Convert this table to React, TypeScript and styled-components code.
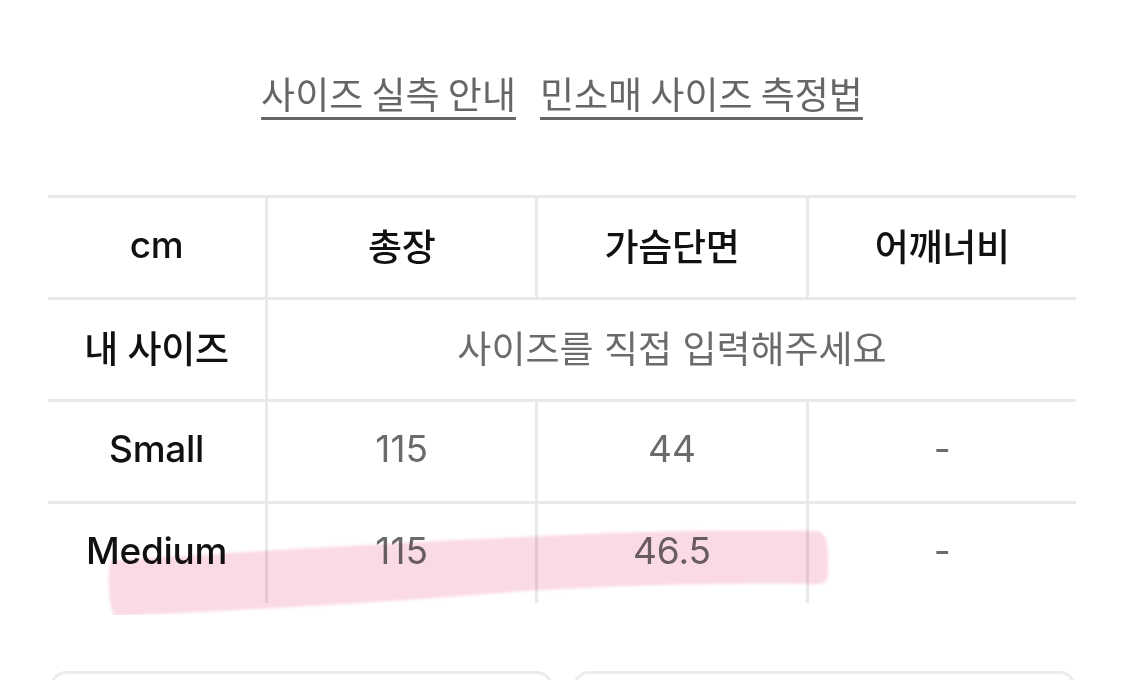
import React from "react";
import styled, { createGlobalStyle } from "styled-components";

const Global = createGlobalStyle`
  html, body { margin: 0; padding: 0; background: #ffffff; }
  body { font-family: Inter, "Noto Sans CJK KR", sans-serif; }
`;

const Page = styled.div`
  width: 1125px;
  height: 680px;
  overflow: hidden;
  box-sizing: border-box;
  padding: 68px 49px 0 48px;
  display: flex;
  flex-direction: column;
`;

const Links = styled.div`
  display: flex;
  justify-content: center;
  gap: 24px;
`;

const GuideLink = styled.a`
  font-family: "Noto Sans CJK KR", sans-serif;
  font-size: 37px;
  line-height: 50px;
  color: #666666;
  text-decoration: underline;
  text-decoration-thickness: 3px;
  text-underline-offset: 8px;
  letter-spacing: 0;
  font-feature-settings: "palt";
  cursor: pointer;
`;

const TableWrap = styled.div`
  position: relative;
  margin-top: 77px;
`;

const Row = styled.div`
  display: grid;
  grid-template-columns: 217px 1fr 1fr 1fr;
  height: 102px;
  box-sizing: border-box;
  border-top: 3px solid #e9e9e9;
  &:last-child { border-bottom: 3px solid #e9e9e9; height: 105px; }
`;

const Cell = styled.div<{ $head?: boolean; $span?: number; $first?: boolean }>`
  display: flex;
  align-items: center;
  justify-content: center;
  grid-column: span ${(p) => p.$span ?? 1};
  border-left: ${(p) => (p.$first ? "none" : "3px solid #e9e9e9")};
  font-family: Inter, "Noto Sans CJK KR", sans-serif;
  font-size: 37px;
  font-weight: ${(p) => (p.$head ? 500 : 400)};
  color: ${(p) => (p.$head ? "#111111" : "#6b6b6b")};
  letter-spacing: ${(p) => (p.$head ? "-0.3px" : "0")};
  padding-bottom: 6px;
`;

const Highlight = styled.svg`
  position: absolute;
  left: 0;
  top: 0;
  width: 1028px;
  height: 420px;
  pointer-events: none;
  mix-blend-mode: multiply;
`;

const Buttons = styled.div`
  display: grid;
  grid-template-columns: 1fr 1fr;
  gap: 20px;
  margin-top: 68px;
  padding-left: 2px;
`;

const OutlineBox = styled.div`
  height: 60px;
  border: 3px solid #ececec;
  border-radius: 16px;
`;

const rows: { label: string; vals: string[] }[] = [
  { label: "Small", vals: ["115", "44", "-"] },
  { label: "Medium", vals: ["115", "46.5", "-"] },
];

export default function App() {
  return (
    <Page>
      <Global />
      <Links>
        <GuideLink>사이즈 실측 안내</GuideLink>
        <GuideLink>민소매 사이즈 측정법</GuideLink>
      </Links>
      <TableWrap>
        <Row>
          <Cell $head $first>cm</Cell>
          <Cell $head>총장</Cell>
          <Cell $head>가슴단면</Cell>
          <Cell $head>어깨너비</Cell>
        </Row>
        <Row>
          <Cell $head $first>내 사이즈</Cell>
          <Cell $span={3}>사이즈를 직접 입력해주세요</Cell>
        </Row>
        {rows.map((r) => (
          <Row key={r.label}>
            <Cell $head $first>{r.label}</Cell>
            {r.vals.map((v, i) => (
              <Cell key={i}>{v}</Cell>
            ))}
          </Row>
        ))}
        <Highlight viewBox="0 0 1028 420">
          <defs>
            <filter id="soft" x="-5%" y="-20%" width="110%" height="140%">
              <feGaussianBlur stdDeviation="1.5" />
            </filter>
          </defs>
          <path
            d="M62 366 C 200 356, 400 345, 560 338 C 640 335, 720 335, 768 336 C 782 337, 780 360, 780 375 C 780 388, 778 390, 760 389 C 620 388, 520 392, 400 402 C 260 412, 140 418, 66 421 C 60 410, 60 380, 62 366 Z"
            fill="#fadae4"
            filter="url(#soft)"
          />
        </Highlight>
      </TableWrap>
      <Buttons>
        <OutlineBox />
        <OutlineBox />
      </Buttons>
    </Page>
  );
}
